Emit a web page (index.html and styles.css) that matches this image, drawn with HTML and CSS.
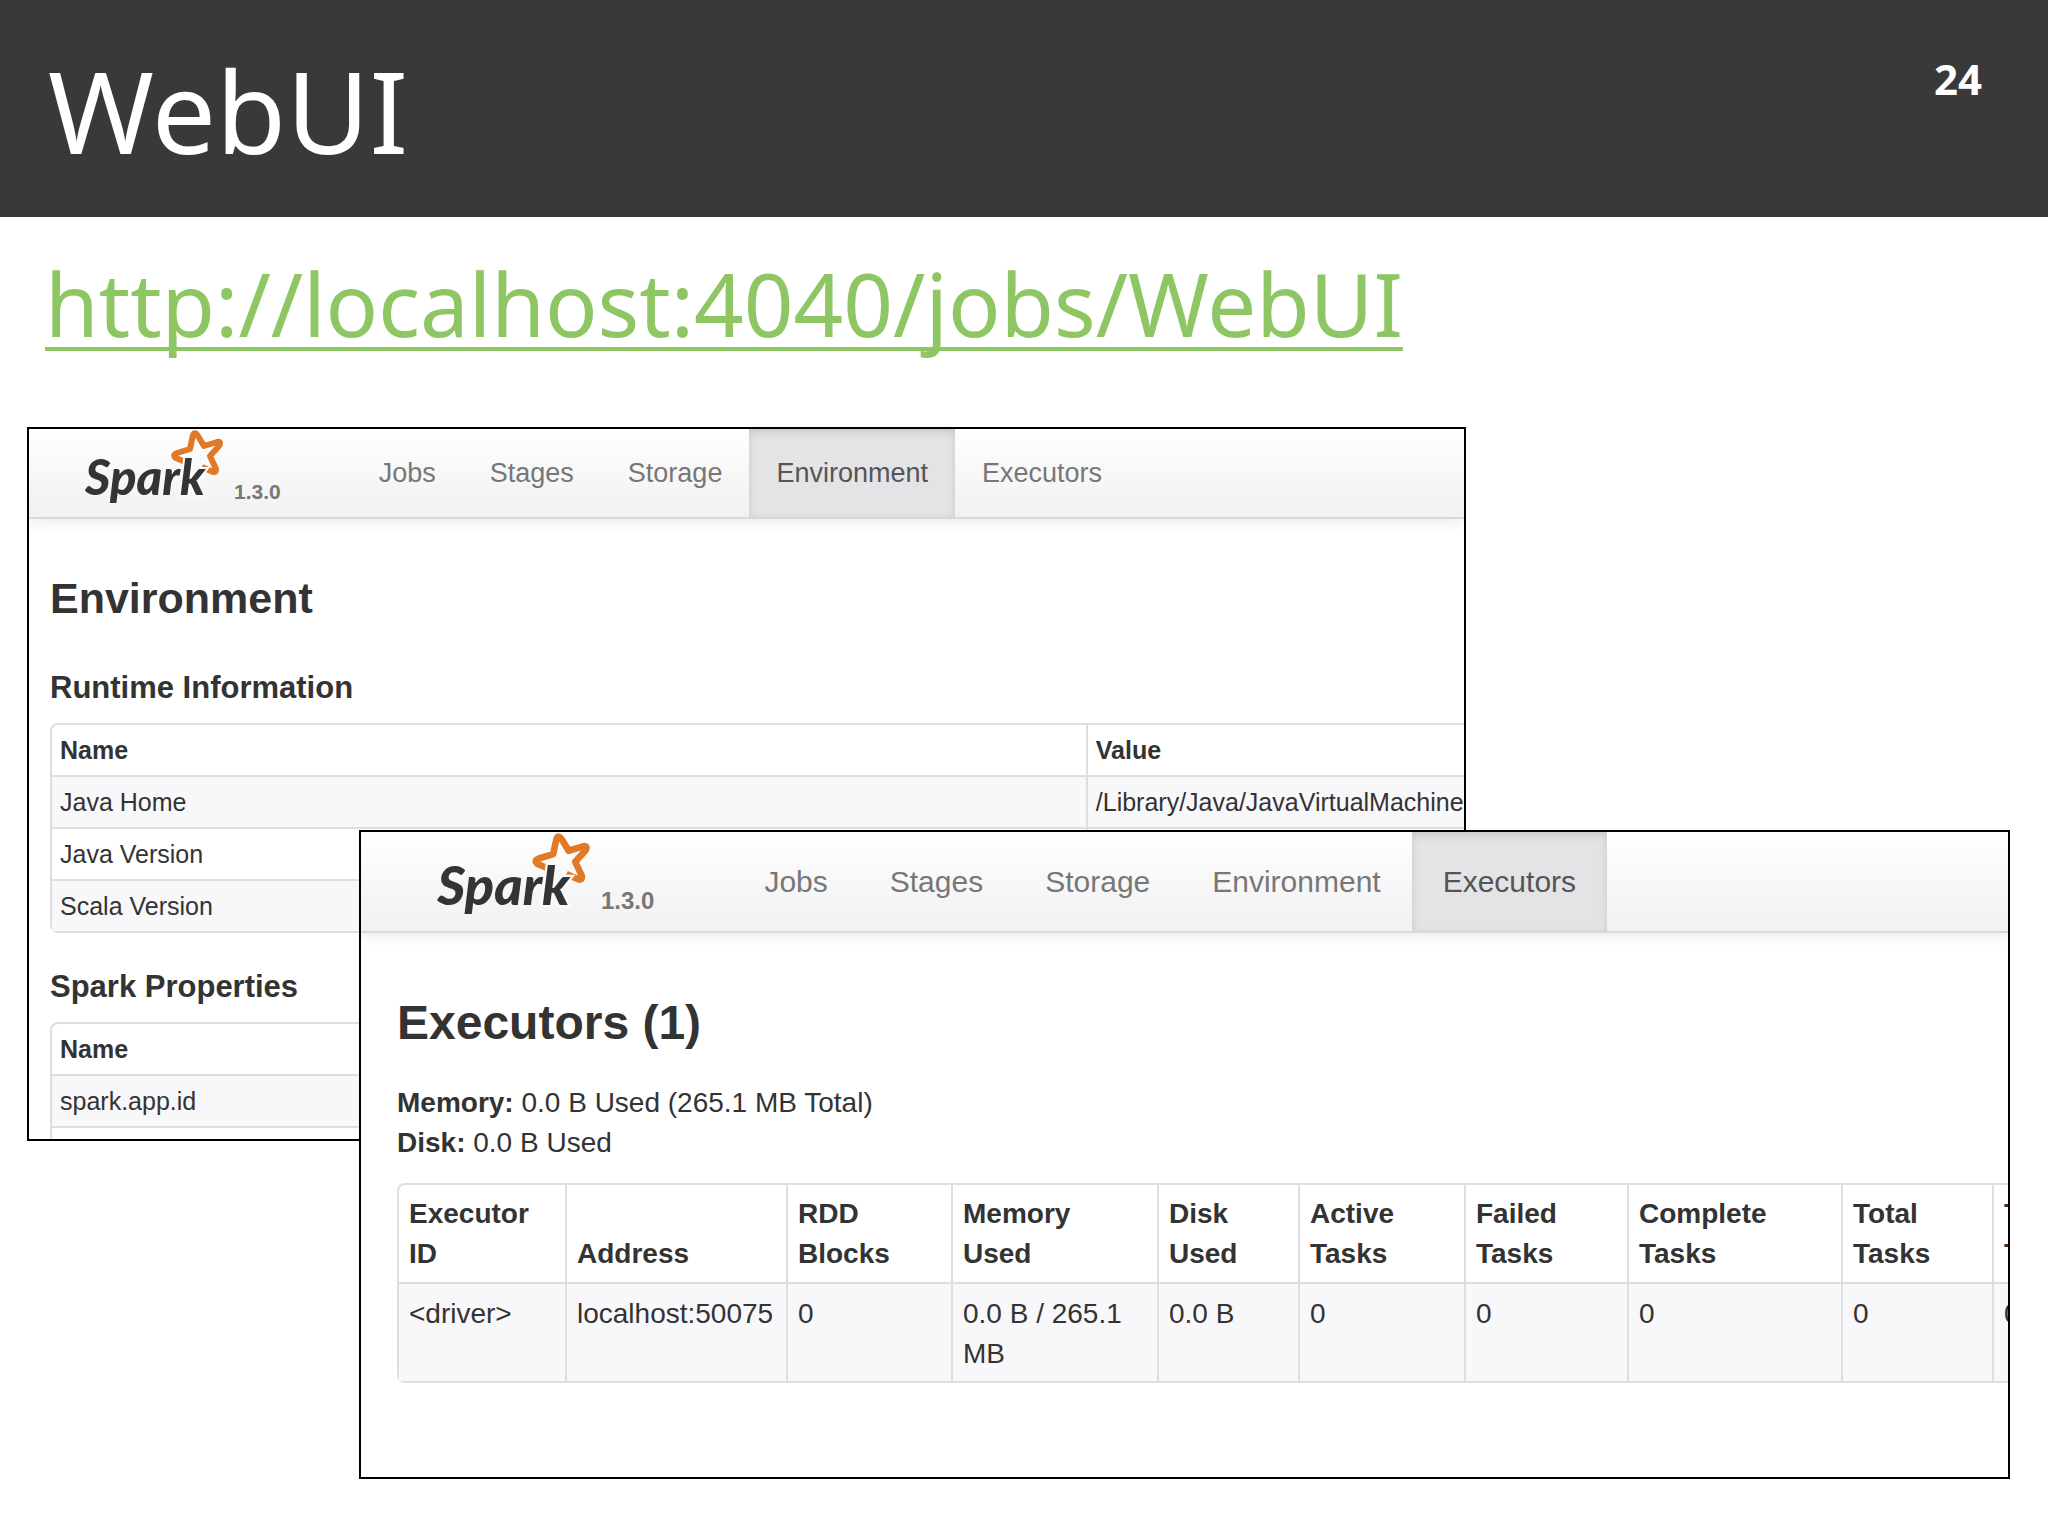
FILE: index.html
```html
<!DOCTYPE html>
<html lang="en">
<head>
  <meta charset="UTF-8" />
  <meta name="viewport" content="width=device-width, initial-scale=1.0">
  <title>WebUI</title>
  <link rel="stylesheet" href="styles.css">
</head>
<body>
  <header class="slide-header">
    <h1 class="slide-title">WebUI</h1>
    <span class="slide-number">24</span>
  </header>

  <main>
    <p class="slide-link"><a href="http://localhost:4040/jobs/">http://localhost:4040/jobs/WebUI</a></p>

    <div class="windows">
      <!-- Environment tab -->
      <section class="window window-env">
        <div class="navbar">
          <div class="brand">
            <svg class="logo" viewBox="0 0 138 76" role="img" aria-label="Spark">
              <path class="logo-star" d="M104 35 L90 29 Q86 26 91 24 L104 20 L107 6 Q109 2 112 7 L118 17 L131 13 Q136 12 133 17 L124 27 L130 40 Q130 45 125 42 L116 38" />
              <text class="logo-text" x="-1" y="66">Spar<tspan class="logo-k">k</tspan></text>
            </svg>
            <span class="version">1.3.0</span>
          </div>
          <nav class="tabs">
            <a href="#jobs">Jobs</a>
            <a href="#stages">Stages</a>
            <a href="#storage">Storage</a>
            <a href="#environment" class="active">Environment</a>
            <a href="#executors">Executors</a>
          </nav>
        </div>
        <div class="content">
          <h2>Environment</h2>
          <h3>Runtime Information</h3>
          <table class="props">
            <thead>
              <tr><th>Name</th><th>Value</th></tr>
            </thead>
            <tbody>
              <tr><td>Java Home</td><td>/Library/Java/JavaVirtualMachines</td></tr>
              <tr><td>Java Version</td><td></td></tr>
              <tr><td>Scala Version</td><td></td></tr>
            </tbody>
          </table>
          <h3>Spark Properties</h3>
          <table class="props">
            <thead>
              <tr><th>Name</th><th></th></tr>
            </thead>
            <tbody>
              <tr><td>spark.app.id</td><td></td></tr>
              <tr><td></td><td></td></tr>
            </tbody>
          </table>
        </div>
      </section>

      <!-- Executors tab -->
      <section class="window window-exec">
        <div class="navbar">
          <div class="brand">
            <svg class="logo" viewBox="0 0 138 76" role="img" aria-label="Spark">
              <path class="logo-star" d="M104 35 L90 29 Q86 26 91 24 L104 20 L107 6 Q109 2 112 7 L118 17 L131 13 Q136 12 133 17 L124 27 L130 40 Q130 45 125 42 L116 38" />
              <text class="logo-text" x="-1" y="66">Spar<tspan class="logo-k">k</tspan></text>
            </svg>
            <span class="version">1.3.0</span>
          </div>
          <nav class="tabs">
            <a href="#jobs">Jobs</a>
            <a href="#stages">Stages</a>
            <a href="#storage">Storage</a>
            <a href="#environment">Environment</a>
            <a href="#executors" class="active">Executors</a>
          </nav>
        </div>
        <div class="content">
          <h2>Executors (1)</h2>
          <ul class="summary">
            <li><strong>Memory:</strong> 0.0 B Used (265.1 MB Total)</li>
            <li><strong>Disk:</strong> 0.0 B Used</li>
          </ul>
          <table class="executors">
            <colgroup>
              <col class="c-id"><col class="c-address"><col class="c-rdd"><col class="c-memory"><col class="c-disk">
              <col class="c-active"><col class="c-failed"><col class="c-complete"><col class="c-total"><col class="c-time">
            </colgroup>
            <thead>
              <tr>
                <th>Executor<br>ID</th>
                <th>Address</th>
                <th>RDD<br>Blocks</th>
                <th>Memory<br>Used</th>
                <th>Disk<br>Used</th>
                <th>Active<br>Tasks</th>
                <th>Failed<br>Tasks</th>
                <th>Complete<br>Tasks</th>
                <th>Total<br>Tasks</th>
                <th>Task<br>Time</th>
              </tr>
            </thead>
            <tbody>
              <tr>
                <td>&lt;driver&gt;</td>
                <td>localhost:50075</td>
                <td>0</td>
                <td>0.0 B / 265.1<br>MB</td>
                <td>0.0 B</td>
                <td>0</td>
                <td>0</td>
                <td>0</td>
                <td>0</td>
                <td>0 ms</td>
              </tr>
            </tbody>
          </table>
        </div>
      </section>
    </div>
  </main>
</body>
</html>
```

FILE: styles.css
```css
* { margin: 0; padding: 0; box-sizing: border-box; }
body {
  font-family: "Noto Sans", Tahoma, sans-serif;
  background: #fff;
}

/* slide */
.slide-header {
  display: flex;
  justify-content: space-between;
  align-items: flex-start;
  background: #393939;
  color: #fff;
  padding: 40px 66px 37px 48px;
}
.slide-title {
  font-size: 114px;
  line-height: 140px;
  font-weight: normal;
}
.slide-number {
  font-size: 42px;
  line-height: 78px;
  font-weight: bold;
}
.slide-link {
  padding: 26px 45px 0;
  font-size: 87px;
  line-height: 120px;
}
.slide-link a {
  color: #8dc663;
  text-decoration-thickness: 4px;
  text-underline-offset: 10px;
  text-decoration-skip-ink: none;
}

/* the second window overlaps the lower right part of the first */
.windows {
  display: grid;
  grid-template-columns: 332fr 1107fr 544fr;
  grid-template-rows: 403px 311px auto;
  padding: 64px 38px 57px 27px;
}
.window {
  border: 2px solid #000;
  background: #fff;
  color: #333;
  font-family: "Liberation Sans", Arial, sans-serif;
  overflow: hidden;
  min-width: 0;
  min-height: 0;
}
.window-env {
  grid-column: 1 / 3;
  grid-row: 1 / 3;
}
.window-exec {
  grid-column: 2 / 4;
  grid-row: 2 / 4;
  z-index: 1;
}

/* navbar */
.navbar {
  display: flex;
  background: linear-gradient(#fff, #f1f0f2);
  border-bottom: 2px solid #d8d8d8;
  box-shadow: 0 2px 15px rgba(0, 0, 0, 0.1);
}
.brand {
  display: flex;
  align-self: flex-start;
  align-items: flex-end;
  gap: 10px;
}
.logo { display: block; overflow: visible; }
.logo-star {
  fill: none;
  stroke: #e17a26;
  stroke-width: 6;
  stroke-linejoin: round;
}
.logo-text {
  font-family: Lato, sans-serif;
  font-size: 49px;
  font-weight: 900;
  font-style: italic;
  fill: #333436;
}
.logo-k {
  stroke: #fbfbfb;
  stroke-width: 4;
  paint-order: stroke;
}
.version {
  font-weight: bold;
  color: #777;
}
.tabs { display: flex; }
.tabs a {
  color: #777;
  text-decoration: none;
}
.tabs .active {
  color: #555;
  background: #e4e3e5;
  box-shadow: inset 0 3px 8px rgba(0, 0, 0, 0.13);
}

/* tables */
table {
  border: 2px solid #dedde0;
  border-right: 0;
  border-radius: 8px;
  border-spacing: 0;
  table-layout: fixed;
}
th, td {
  text-align: left;
  vertical-align: top;
  white-space: nowrap;
}
th { vertical-align: bottom; }
td { border-top: 2px solid #dedde0; }
th + th, td + td { border-left: 2px solid #dedde0; }
tbody tr:nth-child(odd) td { background: #f8f7f9; }

/* environment window */
.window-env .navbar { padding-left: 57px; }
.window-env .logo { width: 138px; height: 76px; }
.window-env .version { font-size: 21px; line-height: 26px; }
.window-env .tabs { margin-left: 71px; }
.window-env .tabs a {
  font-size: 27px;
  line-height: 88px;
  padding: 0 27px;
}
.window-env .content { padding: 49px 0 0 21px; }
.window-env h2 {
  font-size: 43px;
  line-height: 60px;
}
.window-env h3 {
  font-size: 31px;
  line-height: 40px;
  margin: 40px 0 15px;
}
.window-env .props + h3 { margin-top: 34px; }
.props {
  width: 120%;
  font-size: 25px;
  line-height: 34px;
}
.props th:first-child { width: 61%; }
.props th { padding: 8px; }
.props td { height: 52px; padding: 8px; }

/* executors window */
.window-exec { padding-bottom: 94px; }
.window-exec .navbar { padding-left: 77px; }
.window-exec .logo { width: 153px; height: 84px; }
.window-exec .version { font-size: 24px; line-height: 30px; }
.window-exec .tabs { margin-left: 79px; }
.window-exec .tabs a {
  font-size: 30px;
  line-height: 99px;
  padding: 0 31px;
}
.window-exec .content {
  padding: 58px 0 0 36px;
  font-size: 28px;
  line-height: 40px;
}
.window-exec h2 {
  font-size: 48px;
  line-height: 64px;
}
.summary {
  list-style: none;
  margin: 28px 0 20px;
}
.executors { width: 109%; }
.executors th { padding: 9px 10px 8px; }
.executors td { padding: 10px 10px 7px; }
.c-id { width: 166px; }
.c-address { width: 221px; }
.c-rdd { width: 165px; }
.c-memory { width: 206px; }
.c-disk { width: 141px; }
.c-active { width: 166px; }
.c-failed { width: 163px; }
.c-complete { width: 214px; }
.c-total { width: 151px; }
```
